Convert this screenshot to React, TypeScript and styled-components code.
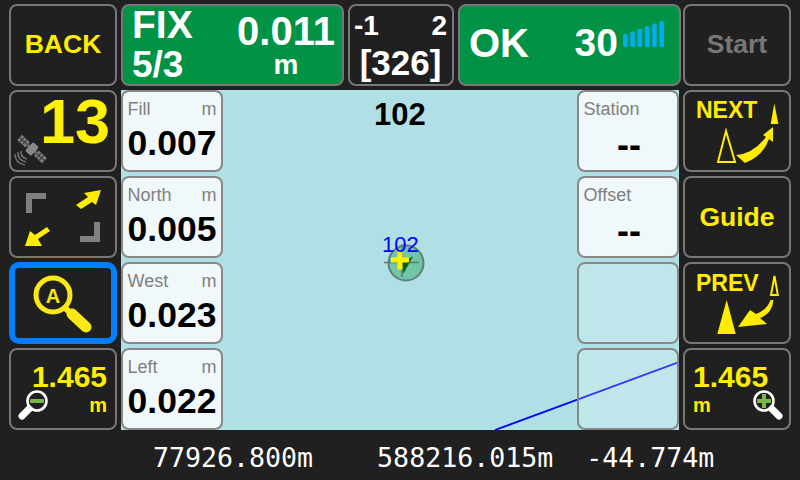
import React from "react";
import styled, { createGlobalStyle } from "styled-components";

const Global = createGlobalStyle`
  html, body { margin: 0; padding: 0; background: #202020; }
  * { box-sizing: border-box; }
`;

const Page = styled.div`
  width: 800px; height: 480px; background: #202020; overflow: hidden;
  padding: 4px 9px 0; font-family: "Liberation Sans", Arial, sans-serif;
  display: flex; flex-direction: column; gap: 4px;
`;
const TopRow = styled.div`display: flex; height: 82px; gap: 4px;`;
const Body = styled.div`display: flex; height: 340px; gap: 4px;`;
const Side = styled.div`display: flex; flex-direction: column; gap: 4px; width: 108px; flex: none;`;

const Tile = styled.div<{ $w?: number; $active?: boolean; $green?: boolean; $ml?: number }>`
  position: relative; flex: none; height: 82px; width: ${p => p.$w ?? 108}px;
  margin-left: ${p => p.$ml ?? 0}px;
  border: ${p => (p.$active ? "6px solid #0080ff" : "2px solid #777")};
  border-radius: ${p => (p.$active ? 10 : 8)}px;
  background: ${p => (p.$green ? "#009245" : "#202020")};
  color: #fff; overflow: hidden;
`;
const Centered = styled(Tile)<{ $dim?: boolean; $up?: boolean }>`
  display: flex; align-items: center; justify-content: center;
  padding-bottom: ${p => (p.$up ? 2 : 0)}px;
  font-weight: 700; font-size: 26.5px; color: ${p => (p.$dim ? "#777" : "#ffed00")};
`;
const FixGrid = styled.div`
  display: grid; grid-template-columns: 1fr auto; height: 100%; padding: 0 7px 0 9px;
`;
const FixLabel = styled.div`font-size: 39px; font-weight: 700; line-height: 38px;`;
const FixRatio = styled.div`font-size: 37px; font-weight: 700; line-height: 36px; margin-top: 3px;`;
const FixValue = styled.div`font-size: 40px; font-weight: 700; line-height: 32px; margin-top: 9px;`;
const FixUnit = styled.div`font-size: 28px; font-weight: 700; line-height: 24px; text-align: center; margin-top: 6px;`;
const Col = styled.div`display: flex; flex-direction: column;`;

const SatGrid = styled.div`display: flex; flex-direction: column; height: 100%; padding: 0 5px 0 4px; font-weight: 700;`;
const SatTop = styled.div`display: flex; justify-content: space-between; font-size: 28px; line-height: 30px; margin-top: 5px;`;
const SatBig = styled.div`font-size: 35px; line-height: 38px; text-align: center; margin-top: 3px;`;

const OkRow = styled.div`display: flex; align-items: center; height: 100%; padding: 0 14px 4px 9px; font-weight: 700;`;
const OkText = styled.div`font-size: 40px; line-height: 60px;`;
const OkNum = styled.div`font-size: 39px; line-height: 60px; margin-left: auto; margin-right: 5px;`;
const Bars = styled.svg`width: 42px; height: 26px; margin-bottom: 18px; flex: none;`;

const MapArea = styled.div`
  position: relative; flex: none; width: 558px; height: 340px; background: #b0e0e6; overflow: hidden;
  display: flex; justify-content: space-between;
`;
const CardCol = styled.div`position: relative; display: flex; flex-direction: column; gap: 4px; width: 102px;`;
const Card = styled.div<{ $empty?: boolean }>`
  height: 82px; border: 2px solid #888; border-radius: 8px; padding: 5px 4.5px 0;
  background: ${p => (p.$empty ? "rgba(255,255,255,.2)" : "#f0f8fb")};
`;
const CardHead = styled.div`display: flex; justify-content: space-between; font-size: 18px; line-height: 24px; color: #808080;`;
const CardValue = styled.div`font-size: 35.5px; font-weight: 700; color: #000; line-height: 36px; margin-top: 4px; text-align: center;`;
const CardDash = styled.div`font-size: 36px; font-weight: 700; color: #000; line-height: 36px; margin-top: 6px; text-align: center; padding-left: 2px;`;

const Overlay = styled.svg`position: absolute; left: 0; top: 0; width: 558px; height: 340px;`;
const PointTitle = styled.div`
  position: absolute; left: 253px; top: 8px; font-size: 31px; font-weight: 700; color: #000; line-height: 34px;
`;
const PointLabel = styled.div`
  position: absolute; left: 261px; top: 142px; font-size: 22px; color: #0000ff; line-height: 26px;
`;
const Icon = styled.svg`position: absolute; left: 0; top: 0; width: 104px; height: 78px;`;
const IconActive = styled.svg`position: absolute; left: 0; top: 0; width: 96px; height: 70px;`;

const SatCount = styled.div`
  position: absolute; right: 5px; top: 0; font-size: 63px; font-weight: 700; color: #fff200; line-height: 58px;
`;
const ZoomValue = styled.div<{ $left?: boolean }>`
  position: absolute; top: 10px; ${p => (p.$left ? "left: 8px;" : "right: 8px;")}
  font-size: 30px; font-weight: 700; color: #ffed00; line-height: 34px;
`;
const ZoomUnit = styled.div<{ $left?: boolean }>`
  position: absolute; top: 43px; ${p => (p.$left ? "left: 8px;" : "right: 8px;")}
  font-size: 20px; font-weight: 700; color: #ffed00; line-height: 24px;
`;
const NavLabel = styled.div<{ $top: number }>`
  position: absolute; left: 11px; top: ${p => p.$top}px; font-size: 23px; font-weight: 700; color: #ffed00; line-height: 30px;
`;
const Footer = styled.div`
  display: flex; height: 46px; align-items: center; padding-left: 144px;
  font-family: "DejaVu Sans Mono", monospace; font-size: 26.6px; color: #fff; white-space: pre;
`;
const Coord = styled.span<{ $ml?: number }>`margin-left: ${p => p.$ml ?? 0}px;`;

const Y = "#ffed00";

export default function App() {
  return (
    <Page>
      <Global />
      <TopRow>
        <Centered $up>BACK</Centered>
        <Tile $w={223} $green>
          <FixGrid>
            <Col>
              <FixLabel>FIX</FixLabel>
              <FixRatio>5/3</FixRatio>
            </Col>
            <Col>
              <FixValue>0.011</FixValue>
              <FixUnit>m</FixUnit>
            </Col>
          </FixGrid>
        </Tile>
        <Tile $w={106}>
          <SatGrid>
            <SatTop><span>-1</span><span>2</span></SatTop>
            <SatBig>[326]</SatBig>
          </SatGrid>
        </Tile>
        <Tile $w={223} $green>
          <OkRow>
            <OkText>OK</OkText>
            <OkNum>30</OkNum>
            <Bars viewBox="0 0 42 26">
              {[0, 1, 2, 3, 4, 5].map(i => (
                <rect key={i} x={i * 7.3} y={13 - i * 2.6} width={4.6} height={13 + i * 2.6} rx={1.6} fill="#00aeef" />
              ))}
            </Bars>
          </OkRow>
        </Tile>
        <Centered $dim $up $ml={-2}>Start</Centered>
      </TopRow>
      <Body>
        <Side>
          <Tile>
            <SatCount>13</SatCount>
            <Icon viewBox="0 0 104 78">
              <g transform="rotate(43 21 57)">
                <rect x="4" y="53.5" width="11" height="7" fill="#7a7a7a" />
                <rect x="27" y="53.5" width="11" height="7" fill="#7a7a7a" />
                <path d="M7.5 53.5 V60.5 M11 53.5 V60.5 M30.5 53.5 V60.5 M34 53.5 V60.5 M4 57 H15 M27 57 H38" stroke="#3a3a3a" strokeWidth="1" />
                <rect x="15" y="55.5" width="12" height="3" fill="#6a6a6a" />
                <rect x="17" y="51" width="8" height="12" rx="1.5" fill="#888" />
              </g>
              <g fill="none" stroke="#6e6e6e" strokeWidth="1.5">
                <path d="M10 59 Q9 65 16 67" />
                <path d="M7 60 Q6 68 15 70" />
                <path d="M4 62 Q4 71 14 73" />
              </g>
            </Icon>
          </Tile>
          <Tile>
            <Icon viewBox="0 0 104 78">
              <path d="M15 15 H35 V21 H21 V35 H15 Z" fill="#808080" />
              <path d="M89 44 V64 H69 V58 H83 V44 Z" fill="#808080" />
              <path d="M90 12 L85 27 L81 24 L70 31 L65 27 L77 19 L73 15 Z" fill={Y} />
              <path d="M14 68 L19 53 L24 57 L36 49 L39 53 L27 61 L31 68 Z" fill={Y} />
            </Icon>
          </Tile>
          <Tile $active>
            <IconActive viewBox="0 0 96 70">
              <circle cx="38" cy="27" r="17" fill="none" stroke="#f9e814" strokeWidth="5" />
              <path d="M50 40 L58 47" stroke="#f9e814" strokeWidth="6" />
              <path d="M57 46 L71 59" stroke="#f9e814" strokeWidth="11" strokeLinecap="round" />
              <text x="38" y="35" fontFamily="Liberation Sans" fontSize="20" fontWeight="700" textAnchor="middle" fill="#f9e814">A</text>
            </IconActive>
          </Tile>
          <Tile>
            <ZoomValue>1.465</ZoomValue>
            <ZoomUnit>m</ZoomUnit>
            <Icon viewBox="0 0 104 78">
              <circle cx="26" cy="51" r="9.5" fill="none" stroke="#fff" strokeWidth="2.6" />
              <path d="M18 59 L11 66" stroke="#fff" strokeWidth="7" strokeLinecap="round" />
              <rect x="19" y="49" width="14" height="4" rx="1" fill="#7ab648" />
            </Icon>
          </Tile>
        </Side>
        <MapArea>
          <Overlay viewBox="0 0 558 340">
            <path d="M374 340 L558 272" stroke="#0000ff" strokeWidth="1.8" />
            <g>
              <circle cx="285" cy="173" r="17.5" fill="#3cb371" fillOpacity=".55" stroke="#5f7f80" strokeWidth="2" />
              <path d="M263 172.5 H298 M281 154 V187" stroke="#5a7f7a" strokeWidth="1.6" />
              <path d="M292 166.5 L282.5 183.5 L280.5 173 L287 169 Z" fill="#0a5a1a" />
              <path d="M279 161 V179.5 M270 170 H288" stroke="#fff200" strokeWidth="5" />
            </g>
          </Overlay>
          <PointLabel>102</PointLabel>
          <PointTitle>102</PointTitle>
          <CardCol>
            <Card><CardHead><span>Fill</span><span>m</span></CardHead><CardValue>0.007</CardValue></Card>
            <Card><CardHead><span>North</span><span>m</span></CardHead><CardValue>0.005</CardValue></Card>
            <Card><CardHead><span>West</span><span>m</span></CardHead><CardValue>0.023</CardValue></Card>
            <Card><CardHead><span>Left</span><span>m</span></CardHead><CardValue>0.022</CardValue></Card>
          </CardCol>
          <CardCol>
            <Card><CardHead><span>Station</span></CardHead><CardDash>--</CardDash></Card>
            <Card><CardHead><span>Offset</span></CardHead><CardDash>--</CardDash></Card>
            <Card $empty />
            <Card $empty />
          </CardCol>
        </MapArea>
        <Side>
          <Tile>
            <NavLabel $top={3}>NEXT</NavLabel>
            <Icon viewBox="0 0 104 78">
              <path d="M41 39 L50 70 H33 Z" fill="none" stroke={Y} strokeWidth="2" />
              <path d="M89.3 11.3 L93.3 32 H85.7 Z" fill={Y} />
              <path d="M51 63 Q68 62 81 45 L78 43 L88 35 L88 50 L84 47 Q78 64 60 71 Z" fill={Y} />
            </Icon>
          </Tile>
          <Centered>Guide</Centered>
          <Tile>
            <NavLabel $top={4}>PREV</NavLabel>
            <Icon viewBox="0 0 104 78">
              <path d="M89.5 12 L92.8 31 H86 Z" fill="none" stroke={Y} strokeWidth="2" />
              <path d="M41.7 36 L50.7 70 H32.3 Z" fill={Y} />
              <path d="M85.5 36 H88.5 Q87 50 75 54 L82 60 L53 63 L65 46 L71 50 Q82 46 85.5 36 Z" fill={Y} />
            </Icon>
          </Tile>
          <Tile>
            <ZoomValue $left>1.465</ZoomValue>
            <ZoomUnit $left>m</ZoomUnit>
            <Icon viewBox="0 0 104 78">
              <circle cx="79" cy="51" r="9.5" fill="none" stroke="#fff" strokeWidth="2.6" />
              <path d="M87 59 L94 66" stroke="#fff" strokeWidth="7" strokeLinecap="round" />
              <path d="M72 51 H86 M79 44 V58" stroke="#7ab648" strokeWidth="4" />
            </Icon>
          </Tile>
        </Side>
      </Body>
      <Footer>
        <Coord>77926.800m</Coord>
        <Coord $ml={64}>588216.015m</Coord>
        <Coord $ml={33}>-44.774m</Coord>
      </Footer>
    </Page>
  );
}
